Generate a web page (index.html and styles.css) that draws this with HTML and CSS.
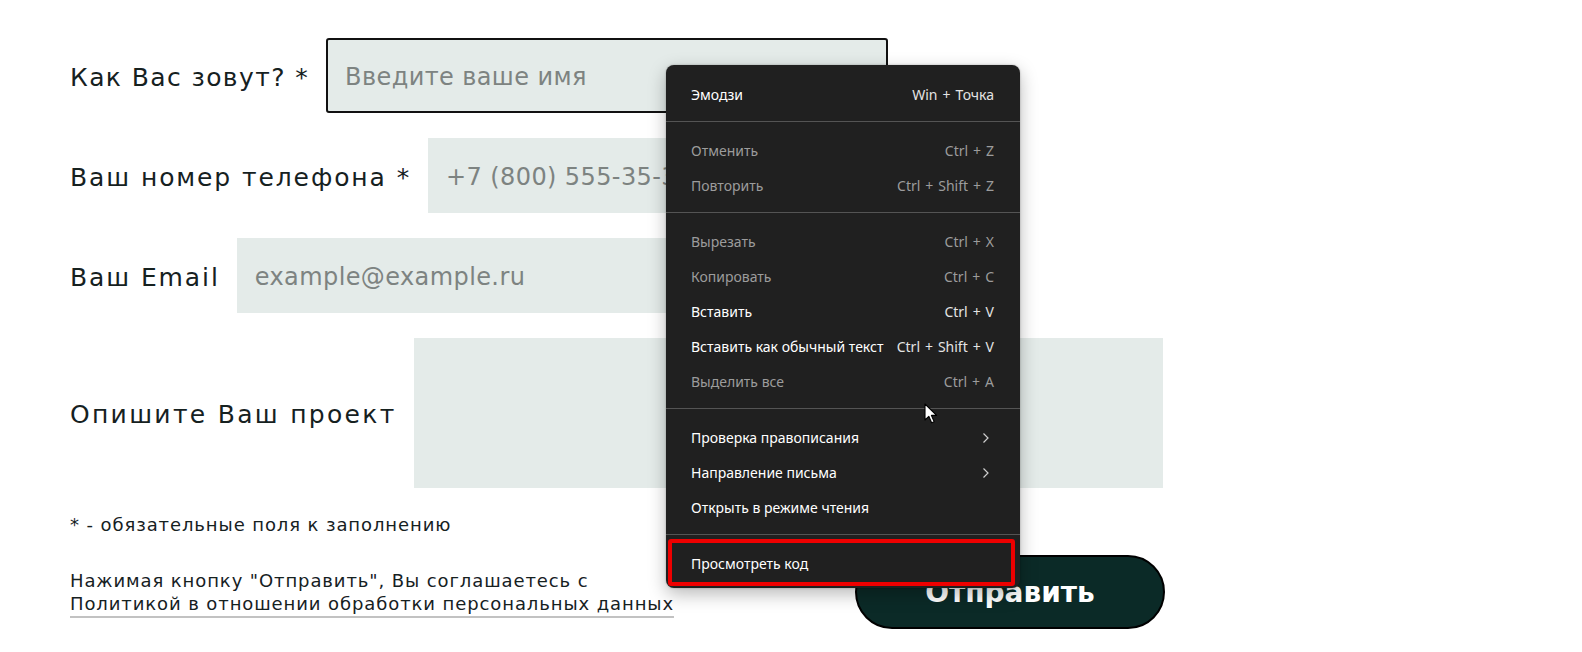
FILE: index.html
```html
<!DOCTYPE html>
<html lang="ru">
<head>
<meta charset="utf-8">
<title>Форма</title>
<link rel="stylesheet" href="styles.css">
</head>
<body>
<div class="page">
  <form class="form">
    <div class="row">
      <label class="label">Как Вас зовут? *</label>
      <input class="field field--focus" type="text" placeholder="Введите ваше имя">
    </div>
    <div class="row">
      <label class="label">Ваш номер телефона *</label>
      <input class="field" type="text" placeholder="+7 (800) 555-35-35">
    </div>
    <div class="row">
      <label class="label">Ваш Email</label>
      <input class="field" type="text" placeholder="example@example.ru">
    </div>
    <div class="row row--wide">
      <label class="label">Опишите Ваш проект</label>
      <textarea class="field field--area"></textarea>
    </div>
    <p class="note">* - обязательные поля к заполнению</p>
    <div class="bottom">
      <p class="consent">Нажимая кнопку "Отправить", Вы соглашаетесь с<br><a class="policy" href="#">Политикой в отношении обработки персональных данных</a></p>
      <button class="submit" type="button">Отправить</button>
    </div>
  </form>

  <div class="menu">
    <div class="group">
      <div class="item"><span>Эмодзи</span><span class="key">Win + Точка</span></div>
    </div>
    <div class="sep"></div>
    <div class="group">
      <div class="item item--off"><span>Отменить</span><span class="key">Ctrl + Z</span></div>
      <div class="item item--off"><span>Повторить</span><span class="key">Ctrl + Shift + Z</span></div>
    </div>
    <div class="sep"></div>
    <div class="group">
      <div class="item item--off"><span>Вырезать</span><span class="key">Ctrl + X</span></div>
      <div class="item item--off"><span>Копировать</span><span class="key">Ctrl + C</span></div>
      <div class="item"><span>Вставить</span><span class="key">Ctrl + V</span></div>
      <div class="item"><span>Вставить как обычный текст</span><span class="key">Ctrl + Shift + V</span></div>
      <div class="item item--off"><span>Выделить все</span><span class="key">Ctrl + A</span></div>
    </div>
    <div class="sep"></div>
    <div class="group">
      <div class="item"><span>Проверка правописания</span><svg class="chev" width="7" height="12" viewBox="0 0 7 12"><polyline points="1.5,1.5 6,6 1.5,10.5" fill="none" stroke="#d0d0d0" stroke-width="1.2"/></svg></div>
      <div class="item"><span>Направление письма</span><svg class="chev" width="7" height="12" viewBox="0 0 7 12"><polyline points="1.5,1.5 6,6 1.5,10.5" fill="none" stroke="#d0d0d0" stroke-width="1.2"/></svg></div>
      <div class="item"><span>Открыть в режиме чтения</span></div>
    </div>
    <div class="sep"></div>
    <div class="group group--last">
      <div class="item item--marked"><span>Просмотреть код</span></div>
    </div>
  </div>

  <svg class="cursor" width="14" height="22" viewBox="0 0 14 22">
    <path d="M1 1 L1 17 L4.8 13.3 L7.6 19.8 L10.2 18.7 L7.4 12.4 L12.6 12.4 Z" fill="#fff" stroke="#000" stroke-width="1.1" stroke-linejoin="round"/>
  </svg>
</div>
</body>
</html>
```

FILE: styles.css
```css
* { box-sizing: border-box; }

html, body {
  margin: 0;
  padding: 0;
  background: #ffffff;
}

.page {
  position: relative;
  width: 1582px;
  height: 652px;
  overflow: hidden;
  padding: 38px 0 0 70px;
  font-family: "DejaVu Sans", "Noto Sans", sans-serif;
  color: #13211f;
}

.form {
  width: 1095px;
  display: flex;
  flex-direction: column;
  gap: 25px;
}

.row {
  display: flex;
  align-items: center;
  gap: 17px;
  width: 818px;
  height: 75px;
}

.row--wide {
  width: 1093px;
  height: 150px;
}

.label {
  padding-top: 3px;
  font-size: 25px;
  font-weight: 400;
  letter-spacing: 1.9px;
  white-space: nowrap;
  color: #16211f;
}

.row:first-child .label {
  letter-spacing: 1.4px;
}

.row--wide .label {
  letter-spacing: 2.3px;
}

.field {
  flex: 1;
  height: 75px;
  min-width: 0;
  border: none;
  border-radius: 0;
  background: #e4ebe9;
  padding: 3px 18px 0;
  font-family: inherit;
  font-size: 24px;
  font-weight: 400;
  letter-spacing: 0.4px;
  color: #222;
  outline: none;
}

.field::placeholder {
  color: #7d8381;
}

.field--focus {
  border: 2px solid #111;
  border-radius: 3px;
  padding-left: 17px;
}

.field--area {
  height: 150px;
  resize: none;
}

.note {
  margin: 1px 0 0;
  font-size: 18px;
  letter-spacing: 0.9px;
  line-height: 22px;
  color: #16211f;
}

.bottom {
  margin-top: -6px;
  display: flex;
  align-items: center;
  justify-content: space-between;
}

.consent {
  margin: 0;
  font-size: 18px;
  letter-spacing: 0.9px;
  line-height: 23px;
  color: #16211f;
}

.policy {
  color: #16211f;
  text-decoration: underline;
  text-decoration-color: #c2c2c2;
  text-decoration-thickness: 2px;
  text-underline-offset: 6px;
}

.submit {
  width: 310px;
  height: 74px;
  border: 2px solid #000;
  border-radius: 37px;
  background: #0b2a27;
  color: #ffffff;
  font-family: "DejaVu Sans", sans-serif;
  font-weight: 700;
  font-size: 28px;
  cursor: pointer;
}

/* context menu overlay */
.menu {
  position: absolute;
  left: 666px;
  top: 65px;
  width: 354px;
  background: #202020;
  border-radius: 8px;
  box-shadow: 0 6px 18px rgba(0, 0, 0, 0.28), 0 0 2px rgba(0, 0, 0, 0.3);
  padding: 1px 0;
  font-family: "Noto Sans", "Open Sans", sans-serif;
  font-size: 14px;
  color: #ffffff;
}

.group {
  padding: 11px 0 9px;
  display: flex;
  flex-direction: column;
}

.group--last {
  padding-bottom: 6px;
}

.sep {
  height: 1px;
  background: #545454;
}

.item {
  position: relative;
  height: 35px;
  display: flex;
  align-items: center;
  justify-content: space-between;
  gap: 6px;
  padding: 0 26px 0 25px;
  white-space: nowrap;
}

.key {
  color: #e4e4e4;
  word-spacing: 1.3px;
}

.item--off,
.item--off .key {
  color: #9c9c9c;
}

.chev {
  margin-right: 5px;
}

.item--marked::after {
  content: "";
  position: absolute;
  left: 2px;
  right: 5px;
  top: -7px;
  bottom: -5px;
  border: 4px solid #ee0000;
  border-radius: 3px;
}

.cursor {
  position: absolute;
  left: 924px;
  top: 403px;
}
```
